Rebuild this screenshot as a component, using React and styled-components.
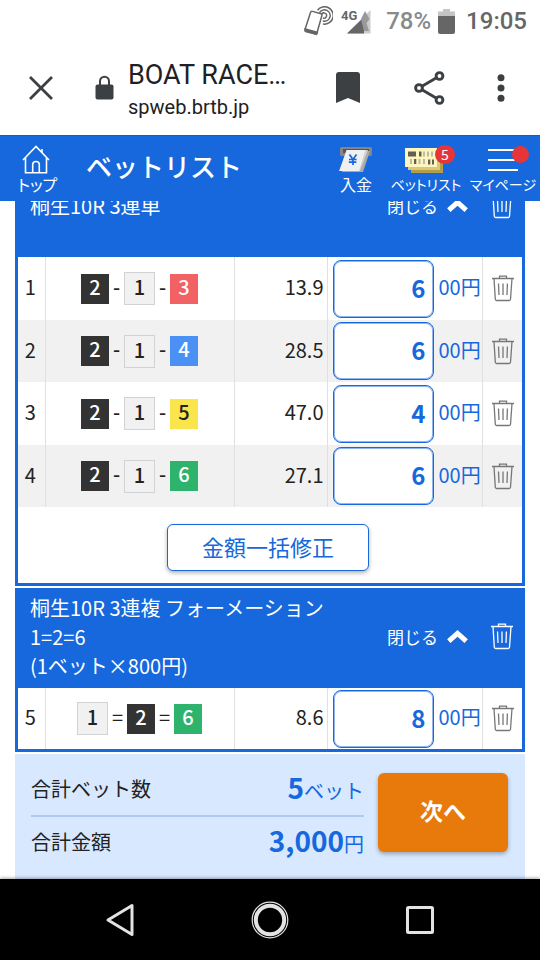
import React from "react";
import styled, { createGlobalStyle, css } from "styled-components";

const blue = "#1668dc";
const jp = `"Noto Sans CJK JP", sans-serif`;

const GlobalStyle = createGlobalStyle`
  *, *::before, *::after { box-sizing: border-box; }
  body { margin: 0; background: #fff; color: #222; font-family: ${jp}; }
  button, input { font-family: inherit; }
  svg { display: block; flex: none; }
`;

const Screen = styled.div`
  display: flex;
  flex-direction: column;
  min-height: 100vh;
  overflow: hidden;
`;

const plainButton = css`
  display: flex;
  align-items: center;
  justify-content: center;
  padding: 0;
  border: 0;
  background: none;
  color: inherit;
  cursor: pointer;
`;

const IconButton = styled.button`
  ${plainButton}
  width: ${(p) => p.$width || 40}px;
  height: 40px;
`;

/* Status bar */
const StatusBar = styled.div`
  display: flex;
  align-items: center;
  justify-content: flex-end;
  height: 42px;
  padding-right: 13px;
  font: 500 24px/28px Roboto, sans-serif;
  color: #666;
`;
const Battery = styled.span`
  margin: 0 7px 0 14px;
  font-weight: 500;
  color: #8a8a8a;
`;
const Clock = styled.time`
  margin-left: 11px;
`;
const Signal = styled.span`
  margin-left: 8px;
`;

/* Browser bar */
const BrowserBar = styled.header`
  display: flex;
  align-items: center;
  height: 93px;
  padding: 0 28px 2px 21px;
  color: #3c4043;
`;
const Address = styled.div`
  flex: 1;
  min-width: 0;
  margin-left: 14px;
  padding-top: 6px;
  font-family: Roboto, sans-serif;
  color: #202124;
`;
const LockSlot = styled.span`
  margin-left: 34px;
`;
const PageTitle = styled.div`
  font-size: 27px;
  line-height: 32px;
  white-space: nowrap;
`;
const PageUrl = styled.div`
  font-size: 20px;
  line-height: 32px;
`;
const BrowserActions = styled.div`
  display: flex;
  gap: 41px;
  align-items: center;
`;

/* Site header */
const SiteHeader = styled.header`
  position: relative;
  z-index: 1;
  display: flex;
  align-items: flex-start;
  height: 66px;
  background: ${blue};
  border-top: 1px solid #2b5a9c;
  color: #fff;
`;
const SiteTitle = styled.h1`
  flex: 1;
  margin: 0;
  padding: 14px 0 0 11px;
  font-size: 26px;
  line-height: 32px;
  font-weight: 500;
  white-space: nowrap;
`;
const NavLink = styled.a`
  display: flex;
  flex-direction: column;
  align-items: center;
  width: ${(p) => p.$width}px;
  padding-top: 9px;
  color: #fff;
  text-decoration: none;
  font-size: ${(p) => p.$size || 14}px;
  line-height: 20px;
  font-feature-settings: "palt";
  white-space: nowrap;
`;
const NavIcon = styled.span`
  position: relative;
  display: flex;
  align-items: center;
  height: 29px;
`;
const Badge = styled.span`
  position: absolute;
  top: 0;
  right: -8px;
  width: 20px;
  height: 19px;
  border-radius: 10px;
  background: #e63538;
  font-size: 14px;
  line-height: 18px;
  text-align: center;
`;
const Dot = styled.span`
  position: absolute;
  top: 1px;
  right: -11px;
  width: 17px;
  height: 17px;
  border-radius: 50%;
  background: #e63538;
`;

/* Bet list */
const BetList = styled.main`
  display: flex;
  flex-direction: column;
  gap: 2px;
  flex: 1;
  margin: -44px 15px 0;
`;
const Panel = styled.section`
  border: 3px solid ${blue};
  border-top: 0;
  background: #fff;
`;
const PanelHeader = styled.div`
  display: flex;
  align-items: center;
  min-height: 100px;
  padding: 4px 0 7px 12px;
  background: ${blue};
  color: #fff;
`;
const PanelTitle = styled.h2`
  flex: 1;
  margin: 0;
  font-size: 20px;
  line-height: 29px;
  font-weight: 400;
`;
const CloseButton = styled.button`
  ${plainButton}
  gap: 9px;
  margin-right: 14px;
  font-size: 17px;
  line-height: 24px;
`;
const BetTable = styled.table`
  width: 100%;
  table-layout: fixed;
  border-collapse: collapse;
  font-size: 20px;
  line-height: 28px;
`;
const Row = styled.tr`
  height: 63px;
  &:nth-child(even) {
    height: 62px;
    background: #f1f1f1;
  }
  &:only-child { height: 61px; }
`;
const Cell = styled.td`
  padding: ${(p) => p.$pad || "0"};
  text-align: ${(p) => p.$align || "left"};
  & + & { border-left: 1px solid #e0e0e0; }
`;
const Col = styled.col`
  width: ${(p) => (p.$width ? p.$width + "px" : "auto")};
`;
const Combo = styled.div`
  display: flex;
  align-items: center;
  justify-content: center;
`;
const boats = {
  1: ["#f1f1f1", "#222"],
  2: ["#333", "#fff"],
  3: ["#f26164", "#fff"],
  4: ["#4a90f5", "#fff"],
  5: ["#fae54d", "#222"],
  6: ["#2eb36c", "#fff"],
};
const Boat = styled.span`
  width: 28px;
  height: 30px;
  background: ${(p) => boats[p.$n][0]};
  color: ${(p) => boats[p.$n][1]};
  font-weight: 500;
  line-height: 26px;
  text-align: center;
  ${(p) => p.$n === 1 && css`
    width: 31px;
    height: 33px;
    border: 1px solid #d2d2d2;
    line-height: 28px;
  `}
`;
const Separator = styled.span`
  width: ${(p) => (p.$wide ? 19 : 15)}px;
  padding-bottom: 4px;
  font-weight: ${(p) => (p.$wide ? 400 : 500)};
  text-align: center;
`;
const Amount = styled.label`
  display: flex;
  align-items: center;
  gap: 5px;
  color: ${blue};
  white-space: nowrap;
`;
const Unit = styled.span`
  padding-bottom: 3px;
`;
const AmountInput = styled.input`
  width: 101px;
  height: 58px;
  padding: 0 7px 3px;
  border: 1px solid ${blue};
  box-shadow: inset 0 0 0 1px #8fb6ee;
  border-radius: 8px;
  background: #fff;
  color: ${blue};
  font-size: 24px;
  font-weight: 700;
  text-align: right;
`;
const DeleteButton = styled.button`
  ${plainButton}
  width: 40px;
  height: 40px;
  color: ${(p) => (p.$light ? "#fff" : "#777")};
`;
const PanelFooter = styled.div`
  display: flex;
  justify-content: center;
  padding: 17px 4px 12px 0;
`;
const EditAllButton = styled.button`
  width: 202px;
  height: 47px;
  padding: 0 0 4px;
  border: 1px solid ${blue};
  border-radius: 6px;
  background: #fff;
  box-shadow: 0 2px 4px rgba(0, 0, 0, 0.3);
  color: ${blue};
  font-size: 22px;
  line-height: 28px;
`;

/* Totals */
const Summary = styled.section`
  display: flex;
  align-items: flex-start;
  gap: 14px;
  flex: 1;
  min-height: 125px;
  padding: 9px 17px 12px 16px;
  background: #d8e8ff;
`;
const Totals = styled.dl`
  flex: 1;
  margin: 0;
`;
const TotalRow = styled.div`
  display: flex;
  align-items: center;
  justify-content: space-between;
  height: 52px;
  padding-bottom: 2px;
  font-size: 20px;
  & + & { border-top: 2px solid #afcaf2; }
`;
const TotalValue = styled.dd`
  margin: 0;
  padding-bottom: 2px;
  color: ${blue};
`;
const Figure = styled.strong`
  font-size: 28px;
  line-height: 40px;
  font-weight: 700;
`;
const NextButton = styled.button`
  width: 130px;
  height: 79px;
  margin-top: 10px;
  padding: 0 0 5px;
  border: 0;
  border-radius: 6px;
  background: #e87a0c;
  box-shadow: 0 2px 4px rgba(0, 0, 0, 0.3);
  color: #fff;
  font-size: 23px;
  font-weight: 700;
`;

/* System navigation */
const SystemNav = styled.nav`
  position: relative;
  display: flex;
  align-items: center;
  justify-content: center;
  gap: 110px;
  height: 81px;
  background: #000;
  box-shadow: 0 -1px 3px rgba(0, 0, 0, 0.35);
  color: #e3e3e3;
`;

const Trash = () => (
  <svg width="22" height="27" viewBox="0 0 22 27" fill="none" stroke="currentColor" strokeWidth="1.3">
    <path d="M0 3.5H22M7.5 3.5V1.2H14.5V3.5M2 3.5L3.3 24.3Q3.4 25.5 4.6 25.5H17.2Q18.4 25.5 18.5 24.3L20 3.5M6.5 8.5L7 20M11 8.5V20M15.4 8.5L15 20" />
  </svg>
);

const Chevron = () => (
  <svg width="21" height="13" viewBox="0 0 21 13" fill="none" stroke="currentColor" strokeWidth="5">
    <path d="M1.8 11.2L10.5 3.4L19.2 11.2" />
  </svg>
);

const PhoneWave = () => (
  <svg width="30" height="30" viewBox="0 0 30 30" fill="none" stroke="#666" strokeWidth="1.5">
    <path d="M14.5 4.3A8.7 8.7 0 1 1 20 18M16.5 6.7A5.7 5.7 0 1 1 19.8 15M18.5 8.6A2.6 2.6 0 1 1 20 12" />
    <path d="M7.5 6.5Q8 5 9.5 5.4L18 7.7Q19.3 8.2 18.9 9.5L14 26.7Q13.5 28.1 12.1 27.7L3 25.3Q1.6 24.8 2 23.5Z" fill="#fff" />
    <path d="M2.2 23L14.4 26.3L13.6 28.4L2.4 25.5Z" fill="#666" />
  </svg>
);

const SignalIcon = () => (
  <svg width="31" height="26" viewBox="0 0 31 26">
    <path d="M6 25.5L29.5 2V25.5Z" fill="#ccc" />
    <path d="M6 25.5L23 9V25.5Z" fill="#666" />
    <path d="M20 11L24 3L28.5 11L25.5 15L28 23H23Z" fill="#999" />
    <text x="0" y="12" fontFamily="Roboto, sans-serif" fontSize="13" fontWeight="700" fill="#666">4G</text>
  </svg>
);

const BatteryIcon = () => (
  <svg width="17" height="25" viewBox="0 0 17 25">
    <path d="M5 0H12V2.5H17V8H0V2.5H5Z" fill="#c4c4c4" />
    <path d="M0 7H17V23Q17 25 15 25H2Q0 25 0 23Z" fill="#666" />
  </svg>
);

const HomeIcon = () => (
  <svg width="32" height="29" viewBox="0 0 32 29" fill="none" stroke="currentColor" strokeWidth="1.6">
    <path d="M1 15L14 1.5L27 15M3.5 12.5V27.7H24.5V12.5M20 7.5V4M10.7 27V19.5Q10.7 16.5 14 16.5T17.3 19.5V27" />
  </svg>
);

const DepositIcon = () => (
  <svg width="34" height="28" viewBox="0 0 34 28">
    <rect x="1" y="1" width="32" height="9" rx="1.5" fill="#858585" />
    <rect x="4" y="3" width="26" height="4" fill="#555" />
    <path d="M8 5H31L24 26H3Z" fill="#aaa" />
    <path d="M8 4H29L21 25H0Z" fill="#cfcfcf" />
    <path d="M7.5 4H26.5L20 25H0.5Z" fill="#f0f0f0" />
    <path d="M10.5 8.5L14 13.5L17.5 8.5M14 13.5V19M10 13.5H17.6M9.8 16.2H17.4" fill="none" stroke={blue} strokeWidth="1.7" />
  </svg>
);

const TicketIcon = () => (
  <svg width="42" height="27" viewBox="0 0 42 27">
    <path d="M6 6H38V27H6Z" fill="#b49d47" />
    <path d="M3 4H35V24H3Z" fill="#dac878" />
    <path d="M0 2H32V21H0Z" fill="#fff5be" />
    <path d="M3 8H11M14 8H16.5M23 16H25.3M9 15.5H11.3M27 16H29" stroke="#64604f" strokeWidth="5" />
    <path d="M18 8H20M22 8H24M26 8H28M5 15.5H7M13.5 15.5H15.5M18 15.5H20" stroke="#bba" strokeWidth="5" />
  </svg>
);

const MenuIcon = () => (
  <svg width="30" height="24" viewBox="0 0 30 24" stroke="currentColor" strokeWidth="2">
    <path d="M0 2H30M0 12H30M0 22H30" />
  </svg>
);

const CloseIcon = () => (
  <svg width="24" height="24" viewBox="0 0 24 24" stroke="currentColor" strokeWidth="2.8">
    <path d="M1 1L23 23M23 1L1 23" />
  </svg>
);

const LockIcon = () => (
  <svg width="19" height="26" viewBox="0 0 19 26">
    <path d="M5 11V6.2A4.5 4.5 0 0 1 14 6.2V11" fill="none" stroke="#3c4043" strokeWidth="2" />
    <rect x="0.5" y="9.5" width="18" height="15" rx="2" fill="#3c4043" />
  </svg>
);

const BookmarkIcon = () => (
  <svg width="24" height="31" viewBox="0 0 24 31" fill="currentColor">
    <path d="M0 3Q0 0 3 0H21Q24 0 24 3V31L12 26L0 31Z" />
  </svg>
);

const ShareIcon = () => (
  <svg width="31" height="34" viewBox="0 0 31 34" fill="none" stroke="currentColor" strokeWidth="2.9">
    <circle cx="5" cy="17" r="3.4" />
    <circle cx="25.5" cy="5" r="3.4" />
    <circle cx="25.5" cy="29" r="3.4" />
    <path d="M8 15.3L22.5 6.8M8 18.7L22.5 27.2" />
  </svg>
);

const MoreIcon = () => (
  <svg width="8" height="28" viewBox="0 0 8 28" fill="currentColor">
    <circle cx="4" cy="3.7" r="3.5" />
    <circle cx="4" cy="14" r="3.5" />
    <circle cx="4" cy="24.3" r="3.5" />
  </svg>
);

const BackIcon = () => (
  <svg width="30" height="34" viewBox="0 0 30 34" fill="none" stroke="currentColor" strokeWidth="3" strokeLinejoin="round">
    <path d="M27 2.5V31.5L3 17Z" />
  </svg>
);

const CircleIcon = () => (
  <svg width="38" height="38" viewBox="0 0 38 38" fill="none" stroke="currentColor">
    <circle cx="19" cy="19" r="17.8" strokeWidth="1.2" />
    <circle cx="19" cy="19" r="14.2" strokeWidth="4" />
  </svg>
);

const SquareIcon = () => (
  <svg width="30" height="30" viewBox="0 0 30 30" fill="none" stroke="currentColor" strokeWidth="3">
    <rect x="2.5" y="2.5" width="25" height="25" rx="1" />
  </svg>
);

function BetRow({ no, boats: list, mark, odds, amount }) {
  return (
    <Row>
      <Cell $align="center" $pad="0 2px 3px 0">{no}</Cell>
      <Cell>
        <Combo>
          {list.map((n, i) => (
            <React.Fragment key={n}>
              {i > 0 && <Separator $wide={mark === "="}>{mark}</Separator>}
              <Boat $n={n}>{n}</Boat>
            </React.Fragment>
          ))}
        </Combo>
      </Cell>
      <Cell $align="right" $pad="0 3px 3px 0">{odds}</Cell>
      <Cell $pad="0 0 0 5px">
        <Amount>
          <AmountInput defaultValue={amount} inputMode="numeric" />
          <Unit>00円</Unit>
        </Amount>
      </Cell>
      <Cell>
        <DeleteButton aria-label="削除"><Trash /></DeleteButton>
      </Cell>
    </Row>
  );
}

function BetPanel({ title, rows, children }) {
  return (
    <Panel>
      <PanelHeader>
        <PanelTitle>
          {title.map((line) => <div key={line}>{line}</div>)}
        </PanelTitle>
        <CloseButton>閉じる<Chevron /></CloseButton>
        <DeleteButton $light aria-label="すべて削除"><Trash /></DeleteButton>
      </PanelHeader>
      <BetTable>
        <colgroup>
          <Col $width={27} /><Col /><Col $width={93} /><Col $width={155} /><Col $width={40} />
        </colgroup>
        <tbody>
          {rows.map((row) => <BetRow key={row.no} {...row} />)}
        </tbody>
      </BetTable>
      {children}
    </Panel>
  );
}

const trifecta = [
  { no: 1, boats: [2, 1, 3], mark: "-", odds: "13.9", amount: "6" },
  { no: 2, boats: [2, 1, 4], mark: "-", odds: "28.5", amount: "6" },
  { no: 3, boats: [2, 1, 5], mark: "-", odds: "47.0", amount: "4" },
  { no: 4, boats: [2, 1, 6], mark: "-", odds: "27.1", amount: "6" },
];
const trio = [{ no: 5, boats: [1, 2, 6], mark: "=", odds: "8.6", amount: "8" }];

export default function App() {
  return (
    <Screen>
      <GlobalStyle />
      <StatusBar>
        <PhoneWave />
        <Signal><SignalIcon /></Signal>
        <Battery>78%</Battery>
        <BatteryIcon />
        <Clock>19:05</Clock>
      </StatusBar>
      <BrowserBar>
        <IconButton aria-label="閉じる"><CloseIcon /></IconButton>
        <LockSlot><LockIcon /></LockSlot>
        <Address>
          <PageTitle>BOAT RACE…</PageTitle>
          <PageUrl>spweb.brtb.jp</PageUrl>
        </Address>
        <BrowserActions>
          <IconButton aria-label="ブックマーク"><BookmarkIcon /></IconButton>
          <IconButton aria-label="共有"><ShareIcon /></IconButton>
          <IconButton $width={22} aria-label="メニュー"><MoreIcon /></IconButton>
        </BrowserActions>
      </BrowserBar>
      <SiteHeader>
        <NavLink href="#top" $width={75} $size={16}><NavIcon><HomeIcon /></NavIcon>トップ</NavLink>
        <SiteTitle>ベットリスト</SiteTitle>
        <NavLink href="#deposit" $width={60} $size={16}><NavIcon><DepositIcon /></NavIcon>入金</NavLink>
        <NavLink href="#bets" $width={80}>
          <NavIcon><TicketIcon /><Badge>5</Badge></NavIcon>ベットリスト
        </NavLink>
        <NavLink href="#mypage" $width={74}>
          <NavIcon><MenuIcon /><Dot /></NavIcon>マイページ
        </NavLink>
      </SiteHeader>
      <BetList>
        <BetPanel title={["桐生10R 3連単"]} rows={trifecta}>
          <PanelFooter><EditAllButton>金額一括修正</EditAllButton></PanelFooter>
        </BetPanel>
        <BetPanel title={["桐生10R 3連複 フォーメーション", "1=2=6", "(1ベット×800円)"]} rows={trio} />
        <Summary>
          <Totals>
            <TotalRow>
              <dt>合計ベット数</dt>
              <TotalValue><Figure>5</Figure>ベット</TotalValue>
            </TotalRow>
            <TotalRow>
              <dt>合計金額</dt>
              <TotalValue><Figure>3,000</Figure>円</TotalValue>
            </TotalRow>
          </Totals>
          <NextButton>次へ</NextButton>
        </Summary>
      </BetList>
      <SystemNav>
        <IconButton aria-label="戻る"><BackIcon /></IconButton>
        <IconButton aria-label="ホーム"><CircleIcon /></IconButton>
        <IconButton aria-label="アプリ一覧"><SquareIcon /></IconButton>
      </SystemNav>
    </Screen>
  );
}
